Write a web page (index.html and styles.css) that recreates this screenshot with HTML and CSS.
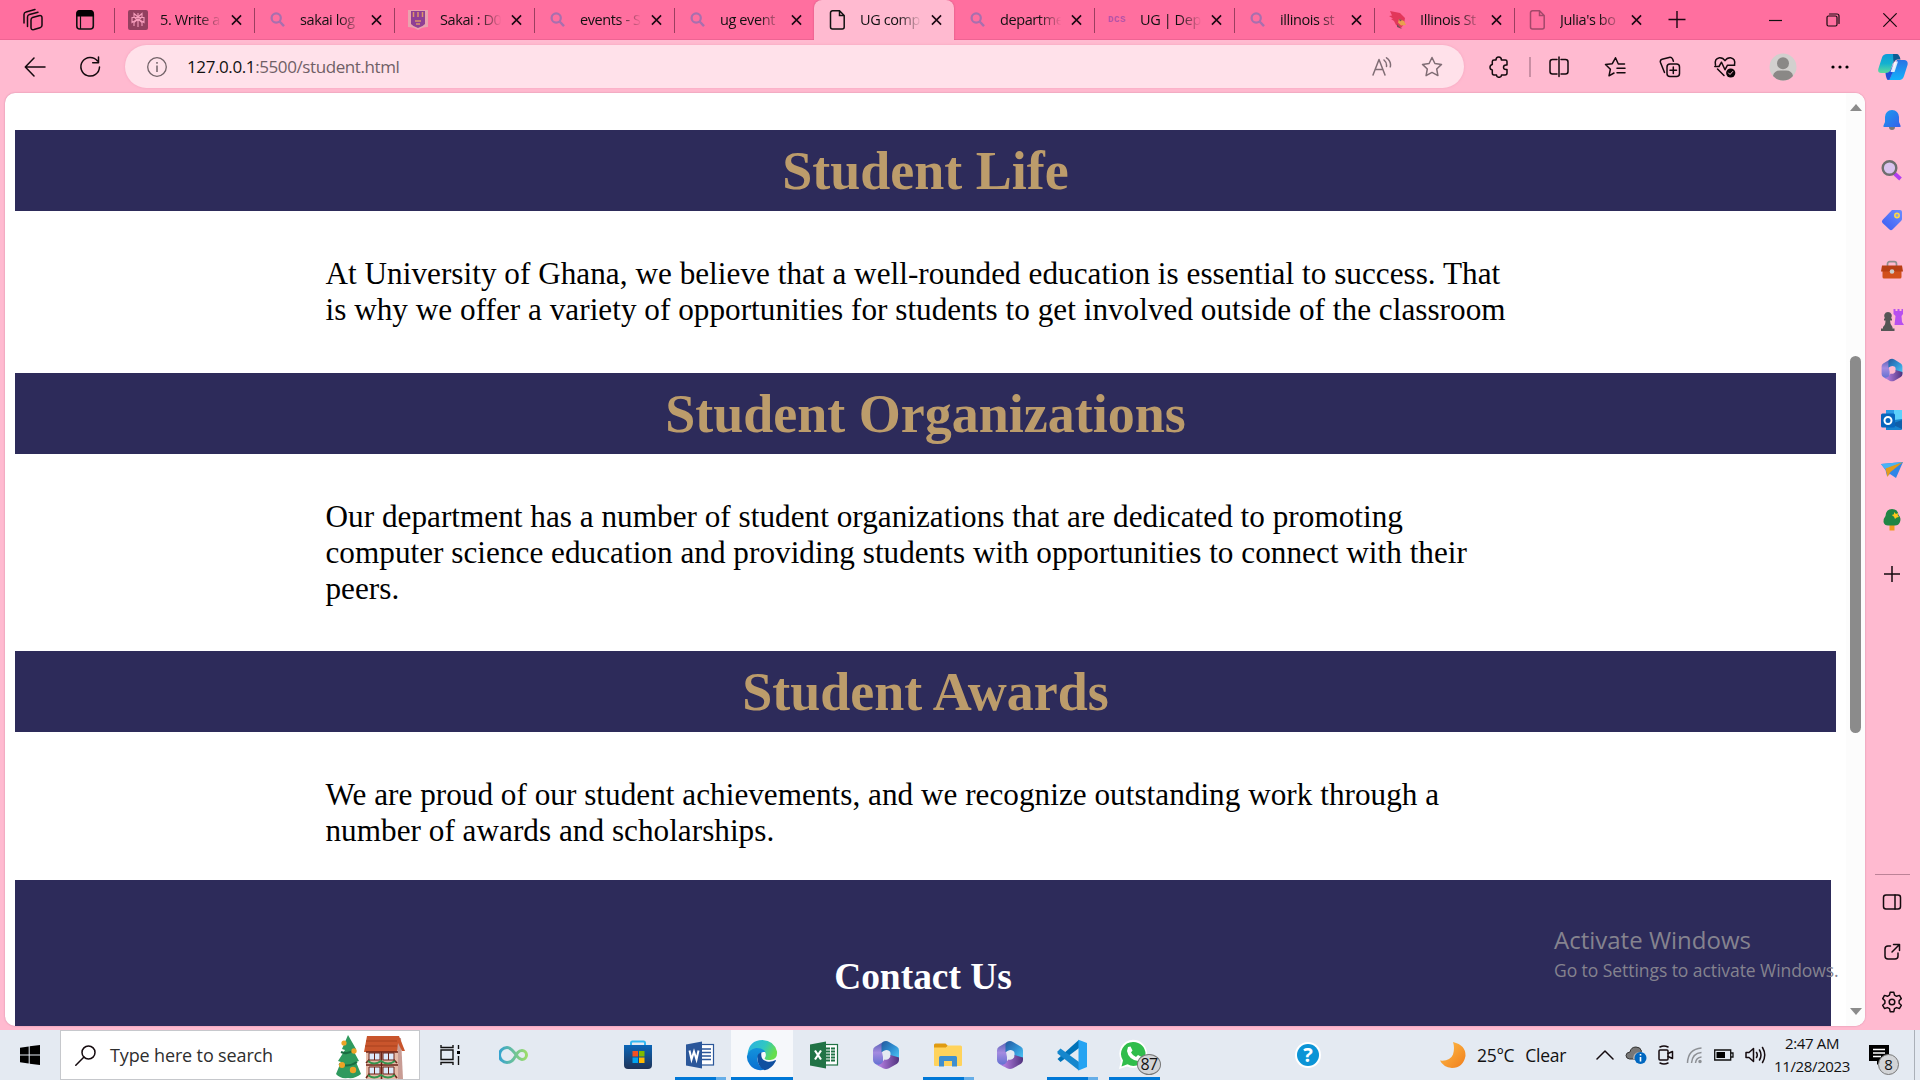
FILE: index.html
```html
<!DOCTYPE html>
<html lang="en">
<head>
<meta charset="utf-8">
<title>UG computer science</title>
<link rel="stylesheet" href="styles.css">
</head>
<body>
<svg class="defs" width="0" height="0">
  <defs>
    <symbol id="close" viewBox="0 0 12 12"><path d="M1 1l10 10M11 1L1 11" fill="none" stroke="#1a0710" stroke-width="1.700"/></symbol>
    <symbol id="lens" viewBox="0 0 20 20"><circle cx="8.200" cy="8" r="4.600" fill="none" stroke="#a86fae" stroke-width="2.200"/><path d="M11.600 11.500l4.400 4.600" stroke="#a86fae" stroke-width="2.400"/></symbol>
    <symbol id="page" viewBox="0 0 20 20"><path d="M4.500.8h7l4.700 4.700v11.500a2 2 0 0 1-2 2h-9.700a2 2 0 0 1-2-2V2.800a2 2 0 0 1 2-2zM11.500.8v4.700h4.700" fill="none" stroke="currentColor" stroke-width="1.500"/></symbol>
    <linearGradient id="gA" x1="0" y1="0" x2="0" y2="1"><stop offset="0" stop-color="#5560b4"/><stop offset=".45" stop-color="#a48be0"/><stop offset="1" stop-color="#5b6fd0"/></linearGradient>
    <linearGradient id="gB" x1="0" y1="0" x2="1" y2="1"><stop offset="0" stop-color="#24589c"/><stop offset=".5" stop-color="#2f8fd2"/><stop offset="1" stop-color="#52cdf8"/></linearGradient>
    <linearGradient id="gC" x1="0" y1="0" x2="1" y2="0"><stop offset="0" stop-color="#c48af0"/><stop offset="1" stop-color="#50327e"/></linearGradient>
    <symbol id="m365" viewBox="0 0 30 30">
      <path d="M13 1.500L4 6.800Q2 8 2 10.500v9.500q0 2.500 2 3.800l4.500 2.500q3.500.5 3.500-3V17l-1-5 4-9z" fill="url(#gA)"/>
      <path d="M12 1.900q3-1.700 6 0l8 4.900q2 1.200 2 3.700v10L19.500 16v-3q0-1.500-1.500-2.300-2.500-1.300-5 0L10.500 12.300V5q0-2 1.500-3.100z" fill="url(#gB)"/>
      <path d="M28 17.500v2.500q0 2.500-2 3.800l-8 4.500q-3 1.500-6 0l-7-4q5 1.500 7-3l1.500-1.800q2 .8 4-.5 2.300-1.300 2-4z" fill="url(#gC)"/>
    </symbol>
    <linearGradient id="gBell" x1="0" y1="0" x2="1" y2="1"><stop offset="0" stop-color="#1b9cf0"/><stop offset="1" stop-color="#3560ea"/></linearGradient>
    <linearGradient id="gTag" x1="1" y1="0" x2="0" y2="1"><stop offset="0" stop-color="#6a8cff"/><stop offset="1" stop-color="#3a5cf2"/></linearGradient>
    <linearGradient id="gEdge" x1="0" y1="0" x2="1" y2=".4"><stop offset="0" stop-color="#2bafe6"/><stop offset=".6" stop-color="#30c7c2"/><stop offset="1" stop-color="#66de4d"/></linearGradient>
    <linearGradient id="gEdge2" x1="0" y1="0" x2="0" y2="1"><stop offset="0" stop-color="#1393dc"/><stop offset="1" stop-color="#0a6fd0"/></linearGradient>
    <linearGradient id="gStore" x1="0" y1="0" x2="0" y2="1"><stop offset="0" stop-color="#0b66b8"/><stop offset="1" stop-color="#1e3358"/></linearGradient>
    <linearGradient id="gInf" x1="0" y1="0" x2="1" y2="0"><stop offset="0" stop-color="#35a3cf"/><stop offset="1" stop-color="#9bdc6a"/></linearGradient>
    <linearGradient id="gCopL" x1="0" y1="0" x2="0" y2="1"><stop offset="0" stop-color="#0e9bd8"/><stop offset=".5" stop-color="#14b1d0"/><stop offset="1" stop-color="#5fdc9b"/></linearGradient>
    <linearGradient id="gCopR" x1="0" y1="0" x2="0" y2="1"><stop offset="0" stop-color="#2a72e4"/><stop offset="1" stop-color="#12b2fb"/></linearGradient>
    <linearGradient id="gMoon" x1="0" y1="0" x2="1" y2="1"><stop offset="0" stop-color="#ffc04a"/><stop offset="1" stop-color="#f07d1c"/></linearGradient>
  </defs>
</svg>
<div class="screen">
  <header class="tabstrip">
    <div class="strip-icons">
      <svg width="22" height="24" viewBox="0 0 22 24" class="line"><path d="M10.500 9.500l6.500-1.800q3-.7 3 2v7.500q0 2-2 2.600l-6 1.700q-3 .7-3-2v-7.500q0-2 1.500-2.500zM5.500 18.500V9q0-2 2-2.500l8.500-2.300M2 15V6.500q0-2 2-2.500l9-2.500"/></svg>
      <svg width="20" height="24" viewBox="0 0 20 24"><rect x="1.800" y="3" width="16.500" height="18" rx="3" fill="none" stroke="#111" stroke-width="1.600"/><path d="M1.500 8.500V5q0-3 3-3h11q3 0 3 3v3.500z" fill="#050103"/><path d="M5.500 8v13" stroke="#111" stroke-width="1.200"/></svg>
    </div>
    <div class="tab"><svg class="fav" viewBox="0 0 20 20"><rect width="20" height="20" rx="2" fill="#93405f"/><path d="M10 3v14M10 7L6 3.500V7l4 3.500M10 7l4-3.500V7l-4 3.500M4 7.500v5L10 9l6 3.500v-5zM6 16v-3.500L10 9l4 3.500V16" fill="none" stroke="#f59cba" stroke-width="1.100"/></svg><span class="title">5. Write a</span><svg class="x"><use href="#close"/></svg></div>
    <div class="tab"><svg class="fav"><use href="#lens"/></svg><span class="title">sakai log</span><svg class="x"><use href="#close"/></svg></div>
    <div class="tab"><svg class="fav" viewBox="0 0 20 20"><path d="M0 0h20v17q-6 0-10 3-4-3-10-3z" fill="#e9a3ae"/><path d="M3 1h14v13q-2 2.500-7 4-5-1.500-7-4z" fill="#8f3f94"/><path d="M5.500 2v5M10 2v5M14.500 2v5M7 11h6M8 14h4" stroke="#dc9468" stroke-width="1.500"/></svg><span class="title">Sakai : D0</span><svg class="x"><use href="#close"/></svg></div>
    <div class="tab"><svg class="fav"><use href="#lens"/></svg><span class="title">events - S</span><svg class="x"><use href="#close"/></svg></div>
    <div class="tab"><svg class="fav"><use href="#lens"/></svg><span class="title">ug event</span><svg class="x"><use href="#close"/></svg></div>
    <div class="tab active"><svg class="fav"><use href="#page"/></svg><span class="title">UG comp</span><svg class="x"><use href="#close"/></svg></div>
    <div class="tab bare"><svg class="fav"><use href="#lens"/></svg><span class="title">departme</span><svg class="x"><use href="#close"/></svg></div>
    <div class="tab"><span class="fav dcs">DCS</span><span class="title">UG | Dep</span><svg class="x"><use href="#close"/></svg></div>
    <div class="tab"><svg class="fav"><use href="#lens"/></svg><span class="title">illinois st</span><svg class="x"><use href="#close"/></svg></div>
    <div class="tab"><svg class="fav" viewBox="0 0 20 20"><path d="M2 1l10 2 5 5-1 6-3 4-5-3-2-4-3-2 2-.5L1 6l3-.5z" fill="#e2375a"/><path d="M11 9l5 2 2 4-5 .5-3-3z" fill="#e9a04e"/><path d="M9 14l5 5-5-2zM11 9l3 1-2 1.500z" fill="#7b4b55"/></svg><span class="title">Illinois St</span><svg class="x"><use href="#close"/></svg></div>
    <div class="tab"><svg class="fav dim"><use href="#page"/></svg><span class="title">Julia's bo</span><svg class="x"><use href="#close"/></svg></div>
    <div class="newtab"><svg width="18" height="18" viewBox="0 0 18 18"><path d="M9 0v17M0.500 8.500h17" stroke="#1a0710" stroke-width="1.400"/></svg></div>
    <div class="winbtns">
      <svg width="14" height="14" viewBox="0 0 14 14"><path d="M0 7.500h13" stroke="#111" stroke-width="1.200"/></svg>
      <svg width="14" height="14" viewBox="0 0 14 14" class="line thin"><rect x="1" y="3" width="10" height="10" rx="1.500"/><path d="M3.500 1h7.500q2 0 2 2v7.500"/></svg>
      <svg width="14" height="14" viewBox="0 0 14 14" class="line thin"><path d="M.7.700l12.600 12.600M13.300.7L.7 13.300"/></svg>
    </div>
  </header>

  <nav class="toolbar">
    <div class="cell"><svg width="22" height="20" viewBox="0 0 22 20" class="line"><path d="M21 10H1.500M10 1L1.300 10 10 19"/></svg></div>
    <div class="cell"><svg width="22" height="22" viewBox="0 0 22 22" class="line"><path d="M18.500 5A9.300 9.300 0 1 0 20.500 11M19.500 1v5.800h-5.800"/></svg></div>
    <div class="address">
      <svg width="22" height="22" viewBox="0 0 22 22"><circle cx="11" cy="11" r="9.300" fill="none" stroke="#726268" stroke-width="1.300"/><path d="M11 9.500v6.500M11 6v1.800" stroke="#726268" stroke-width="1.500"/></svg>
      <span class="url">127.0.0.1<i>:5500/student.html</i></span>
      <span class="grow"></span>
      <svg width="20" height="20" viewBox="0 0 20 20" class="line grey"><path d="M1 18L7 2.500 13 18M3.200 12.500h7.700M12 3q3 2.500 2.500 6.500M14.500.8q5 3.500 3.800 9"/></svg>
      <svg width="22" height="22" viewBox="0 0 22 22" class="line grey star"><path d="M11 1.500l2.900 6 6.600.9-4.800 4.600 1.200 6.600-5.900-3.200-5.900 3.200 1.200-6.600L1.500 8.400l6.600-.9z"/></svg>
    </div>
    <div class="cell c-ext"><svg width="20" height="22" viewBox="0 0 20 22" class="line"><path d="M7 4q0-3 2.700-3t2.700 3h4q1.600 0 1.600 1.600v3.400h-1q-2.500 0-2.500 2.300T17 13.600h1V17q0 2-2 2h-3.500q0 2.300-2.500 2.300T7.500 19H5q-1.700 0-1.700-2v-3Q1 13.700 1 11.300T3.300 8.500V5.600Q3.300 4 5 4z"/></svg></div>
    <div class="cell"><span class="vbar"></span></div>
    <div class="cell"><svg width="22" height="22" viewBox="0 0 22 22" class="line"><path d="M9 3.500H4.500q-2.500 0-2.500 2.500v9.500Q2 18 4.500 18H9M13 3.500h4.500q2.500 0 2.500 2.500v9.500q0 2.500-2.500 2.500H13M11 1v19.500"/></svg></div>
    <div class="cell"><svg width="22" height="22" viewBox="0 0 22 22" class="line"><path d="M20.500 8h-6.200L11.500 1.800 8.300 7.700l-6.800.8 4.900 4.700L5 19.800l5-2.800M13 12.300h8M13 16.800h8"/></svg></div>
    <div class="cell"><svg width="22" height="22" viewBox="0 0 22 22" class="line"><rect x="8" y="8" width="12.500" height="12.500" rx="3"/><path d="M14.300 11v6.500M11 14.300h6.500M5.500 16.500L1.500 6.500q-.8-2.500 1.600-3.300l7-1.800q2.300-.6 3.500 1.600l.8 2.200"/></svg></div>
    <div class="cell"><svg width="22" height="22" viewBox="0 0 22 22" class="line"><path d="M1.500 9q-1.300-6.500 4-7.300Q9 1.500 11 4.700q2-3.200 5.500-3 5.300.8 4 7.300M.8 10.500H5l2.500-4.300 3.500 7.500 2.500-4.500h7.200M3.500 13l6.500 6.500"/><circle cx="16.700" cy="17" r="4.600" fill="#080305" stroke="none"/><path d="M14.600 17l1.400 1.500 2.700-3" stroke="#ffbad0" stroke-width="1"/></svg></div>
    <div class="cell"><svg width="28" height="28" viewBox="0 0 28 28"><circle cx="14" cy="14" r="13.500" fill="#d2d0ce"/><circle cx="14" cy="10.300" r="6" fill="#8a8886"/><path d="M4 23q1-5.500 7-5.500h6q6 0 7 5.500-4 4.500-10 4.500T4 23z" fill="#8a8886"/></svg></div>
    <div class="cell"><svg width="18" height="4" viewBox="0 0 18 4"><circle cx="2" cy="2" r="1.600"/><circle cx="9" cy="2" r="1.600"/><circle cx="16" cy="2" r="1.600"/></svg></div>
    <div class="cell"><svg width="30" height="28" viewBox="0 0 30 28"><path d="M19 7h7q4.500.5 3.500 5l-3.500 11q-1 3.500-4 4H9q3-.5 4-4z" fill="url(#gCopR)"/><path d="M21 1q-3 0-4 3l-4.500 13q-1 3-4 3H3Q-.5 20 .3 16L4 4.500Q5 1 9 1z" fill="url(#gCopL)"/><path d="M15 1h4q2.500.5 3.500 5.500h-3q-2 0-3 2l-1 2z" fill="#0e5c93"/><path d="M7.500 20q3 0 4.500-2l4-8.500-1 9-2.500 6q-1 2.500-2.500 2.500-1.800-.5-2.500-7z" fill="#1f4fd8"/><path d="M15.500 10.500q.8-2 3-2h1.500L16.500 19H12.500z" fill="#fff" fill-opacity=".85"/></svg></div>
  </nav>

  <div class="middle">
    <main class="viewport">
      <div class="document">
        <h1 class="bar">Student Life</h1>
        <p class="para">At University of Ghana, we believe that a well-rounded education is essential to success. That is why we offer a variety of opportunities for students to get involved outside of the classroom</p>
        <h1 class="bar">Student Organizations</h1>
        <p class="para">Our department has a number of student organizations that are dedicated to promoting computer science education and providing students with opportunities to connect with their peers.</p>
        <h1 class="bar">Student Awards</h1>
        <p class="para last">We are proud of our student achievements, and we recognize outstanding work through a number of awards and scholarships.</p>
        <footer class="contact"><h2>Contact Us</h2></footer>
      </div>
      <div class="scroll">
        <svg width="12" height="7" viewBox="0 0 12 7"><path d="M0 7l6-7 6 7z" fill="#8b8b8b"/></svg>
        <span class="thumb"></span>
        <svg width="12" height="7" viewBox="0 0 12 7"><path d="M0 0l6 7 6-7z" fill="#8b8b8b"/></svg>
      </div>
    </main>
    <aside class="sidebar">
      <div class="side"><svg width="18" height="22" viewBox="0 0 18 22"><path d="M6 18h6q0 3-3 3t-3-3z" fill="#777"/><path d="M9 1q6.500.3 7 7v5l1.500 3.500V18H.5v-1.500L2 13V8q.5-6.700 7-7z" fill="url(#gBell)"/></svg></div>
      <div class="side"><svg width="22" height="22" viewBox="0 0 22 22"><path d="M13 14l6.500 6" stroke="#b23df0" stroke-width="3.800"/><circle cx="8.500" cy="9" r="6.800" fill="#d9c3ee" stroke="#6e6e6e" stroke-width="2.400"/></svg></div>
      <div class="side"><svg width="22" height="22" viewBox="0 0 22 22"><path d="M11 1h8q2 0 2 2v7q0 1-1 2l-8.500 8.500q-1.500 1.300-3 0L1.500 14q-1.300-1.500 0-3z" fill="url(#gTag)"/><circle cx="16" cy="6.500" r="2.200" fill="#91a0d8" stroke="#ffd93f" stroke-width="1.500"/></svg></div>
      <div class="side"><svg width="24" height="20" viewBox="0 0 24 20"><path d="M7.500 6V4q0-2.300 2.300-2.300h4.400q2.300 0 2.300 2.300v2" fill="none" stroke="#8e8e8e" stroke-width="1.700"/><path d="M2.500 10h19v7q0 1.500-1.500 1.500H4q-1.500 0-1.500-1.500z" fill="#d24f1b"/><path d="M2 5.500h20l1 6H1z" fill="#b83f14"/><circle cx="12" cy="11.500" r="2.300" fill="#ccc"/></svg></div>
      <div class="side"><svg width="24" height="24" viewBox="0 0 24 24"><path d="M13.500 1h2v2h2V1h2v2h2V1H23v5l-1.500 2 .5 6 2 3h-9.500l1-9-2-2z" fill="#b750ef"/><path d="M8 4a4 4 0 0 1 3 6.500h1v2h-2q0 4 2.500 6.500v1.500h2V23H1v-2.500h2V19q2.500-2 2.500-6.500H4v-2h1A4 4 0 0 1 8 4z" fill="#555"/></svg></div>
      <div class="side"><svg width="24" height="24"><use href="#m365"/></svg></div>
      <div class="side"><svg width="22" height="22" viewBox="0 0 22 22"><path d="M5 1h15q1 0 1 1v9L5 12z" fill="#2b9ae6"/><path d="M13 1h8v9l-8 5z" fill="#5bd0fb"/><path d="M5 12l16-2v10q0 1-1 1H5z" fill="#1683cf"/><path d="M21 11v9L10 15z" fill="#0f5faa"/><rect y="4.500" width="14" height="14" rx="1.500" fill="#0765bd"/><circle cx="7" cy="11.500" r="3.500" fill="none" stroke="#fff" stroke-width="2"/></svg></div>
      <div class="side"><svg width="24" height="20" viewBox="0 0 24 20"><path d="M1 4L23 2 16 18l-6-4-3 2-1.500-6z" fill="#2f86e8"/><path d="M1 4L23 2 5.500 9.500z" fill="#49b3f6"/><path d="M23 2L5.500 8.500 7.500 17l3-5z" fill="#e39a1c"/></svg></div>
      <div class="side"><svg width="20" height="24" viewBox="0 0 20 24"><path d="M7.500 16h5v6.500h-5z" fill="#f39a1e"/><path d="M10 1q6 0 6.500 6 3 3 1.500 7-1.500 4-6 3.500H7Q2.500 18 1.500 14 1 11 3.500 8 4 1 10 1z" fill="#218544"/><path d="M12 4l2 2 2-1-.3 2.300L17 9l-2.300.5L13 11l-1-2.300L9.800 7l2.200-.8z" fill="#ffc61b"/></svg></div>
      <div class="side plus"><svg width="16" height="16" viewBox="0 0 16 16" class="line"><path d="M8 0v16M0 8h16"/></svg></div>
      <div class="side-foot">
        <div class="side"><svg width="20" height="18" viewBox="0 0 20 18" class="line"><rect x="1.500" y="2" width="17" height="14" rx="2.500"/><path d="M13 2v14"/></svg></div>
        <div class="side"><svg width="18" height="18" viewBox="0 0 18 18" class="line"><path d="M7.500 3H5Q2 3 2 6v7q0 3 3 3h7q3 0 3-3v-3M10.500 1.500h6v6M16.500 1.500L9 9"/></svg></div>
        <div class="side"><svg width="22" height="22" viewBox="0 0 22 22" class="line"><circle cx="11" cy="11" r="2.800"/><path d="M9.200 1.200h3.600l.7 3 2 1.100 3-.9 1.800 3.200-2.200 2.100v2.500l2.200 2.100-1.800 3.200-3-.9-2 1.100-.7 3H9.200l-.7-3-2-1.100-3 .9-1.800-3.200 2.200-2.100V9.700L1.700 7.600l1.800-3.200 3 .9 2-1.100z"/></svg></div>
      </div>
    </aside>
    <div class="watermark"><span class="w1">Activate Windows</span><span class="w2">Go to Settings to activate Windows.</span></div>
  </div>

  <div class="taskbar">
    <div class="start"><svg width="20" height="20" viewBox="0 0 20 20"><path d="M0 2.800L8.700 1.500v8H0zM9.700 1.300L20 0v9.500H9.700zM0 10.500h8.700v8L0 17.200zM9.700 10.500H20V20L9.700 18.700z"/></svg></div>
    <div class="search">
      <svg width="21" height="21" viewBox="0 0 21 21" class="line"><circle cx="13.500" cy="7.500" r="6.500"/><path d="M9 12L.8 20.300"/></svg>
      <span class="hint">Type here to search</span>
      <svg class="scene" width="72" height="44" viewBox="0 0 72 44">
        <path d="M13 0l8 14-3 1 6 11-3 1 5 12q-6 5-13 4-8 1-12-4l5-12-3-1 7-11-3-1z" fill="#2f9a5e"/><path d="M6 17q7 3 13-2M4 29q9 4 18-2" stroke="#1a6d42" fill="none" stroke-width="2"/>
        <circle cx="9" cy="8" r="2.600" fill="#eda326"/><circle cx="19" cy="16" r="2.700" fill="#eda326"/><circle cx="7" cy="30" r="3" fill="#eda326"/><circle cx="18" cy="35" r="3.200" fill="#eda326"/>
        <path d="M62 3h4l2 41h-7z" fill="#c89c94"/><path d="M31 15h32v29H31z" fill="#e6bba9"/>
        <path d="M32 1h32l6 15h-3l-4-8-1 9H29z" fill="#c9552c"/><path d="M31 6h31M30 11h32" stroke="#a8431f" stroke-width="1"/>
        <path d="M31 17h32M31 30h32M31 28l5-5M62 28l-5-5M46.500 17v27M31 43l4-5M62 43l-4-5" stroke="#6b2418" stroke-width="1.600"/>
        <path d="M34 18h11v7H34zM48 18h11v7H48zM34 32h11v7H34zM48 32h11v7H48z" fill="#dce9fb" stroke="#6b2418" stroke-width="1"/>
        <path d="M39.500 18v7M53.500 18v7M39.500 32v7M53.500 32v7" stroke="#6b2418"/>
        <path d="M33 26q6 5 13 0 7 5 14 0M33 40q6 5 13 0 7 5 14 0" fill="none" stroke="#36954f" stroke-width="2"/>
      </svg>
    </div>
    <div class="tcell tv"><svg width="22" height="20" viewBox="0 0 22 20"><path d="M1 0v2.500h12V0M1 20v-2.500h12V20M1 5h12v9.500H1zM18.500 0v4M18.500 11v9" fill="none" stroke="#111" stroke-width="1.400"/><rect x="17" y="6" width="3" height="3"/></svg></div>
    <div class="tcell inf"><svg width="30" height="18" viewBox="0 0 30 18"><path d="M23 13.500q-2.500 0-5-3.500T13 4Q10.500 1.500 8 1.500a7.300 7.300 0 0 0 0 15q4.500 0 7-4t3.800-6q1.700-2 4.200-2a4.500 4.500 0 0 1 0 9z" fill="none" stroke="url(#gInf)" stroke-width="3"/></svg></div>
    <div class="apps">
      <div class="app"><svg width="30" height="30" viewBox="0 0 30 30"><path d="M8 7V3q0-1.500 1.500-1.500h11Q22 1.500 22 3v4" fill="none" stroke="#32b8f3" stroke-width="2"/><path d="M1 5h28v20q0 4-4 4H5q-4 0-4-4z" fill="url(#gStore)"/><path d="M9.500 11H15v5.500H9.500z" fill="#f25022"/><path d="M16 11h5.500v5.500H16z" fill="#7fba00"/><path d="M9.500 17.500H15V23H9.500z" fill="#00a4ef"/><path d="M16 17.500h5.500V23H16z" fill="#ffb900"/></svg></div>
      <div class="app run two"><svg width="30" height="28" viewBox="0 0 30 28"><rect x="14" y="3.500" width="14.500" height="20.500" fill="#fff" stroke="#2b579a" stroke-width="1.200"/><path d="M17 8h9M17 11.500h9M17 15h9M17 18.500h9" stroke="#2b579a" stroke-width="1.500"/><path d="M1 3.500L17 .5v27L1 24.500z" fill="#2b579a"/><path d="M4.500 9.500l2 9 2.500-8 2.500 8 2-9" fill="none" stroke="#fff" stroke-width="2"/></svg></div>
      <div class="app run open"><svg width="32" height="32" viewBox="0 0 32 32"><path d="M1.500 15.500Q3 1 16.500 1 28 1.500 31 12.500q.8 7.500-6.500 8.500-5 .5-6-1.500 2.500-3 .5-6.500-4-4-9-2-5.500 2-8.500 4.500z" fill="url(#gEdge)"/><path d="M1 17q2-7 9-8 7-.3 9.500 4-7-1-8 6-.5 8 8 11.500Q9 33 4 26 .5 22 1 17z" fill="url(#gEdge2)"/><path d="M11.500 19q-.8-4 4-6-1.500 8 5.500 9.500 5 .7 8.500-1.500.8.200.2 1.200-4 7.500-11 9Q11.500 28 11.500 19z" fill="#0f4fa0"/></svg></div>
      <div class="app"><svg width="30" height="28" viewBox="0 0 30 28"><rect x="14" y="3.500" width="14.500" height="20.500" fill="#fff" stroke="#217346" stroke-width="1.200"/><path d="M17 7.500h9M17 10.500h9M17 13.500h9M17 16.500h9M17 19.500h9" stroke="#217346" stroke-width="1.800"/><path d="M21.500 5v18" stroke="#fff"/><path d="M1 3.500L17 .5v27L1 24.500z" fill="#217346"/><path d="M6 9.500l6 9M12 9.500l-6 9" stroke="#fff" stroke-width="2.200"/></svg></div>
      <div class="app"><svg width="30" height="30"><use href="#m365"/></svg></div>
      <div class="app run two"><svg width="30" height="26" viewBox="0 0 30 26"><path d="M1 3q0-1.500 1.500-1.500h10L15 4 13 6H1z" fill="#e09b12"/><path d="M1 5.500h12l2-2h12.500Q29 3.500 29 5v18q0 1-1 1H2q-1 0-1-1z" fill="#ffd35c"/><path d="M6 24.500v-9q0-1.500 1.500-1.500h15q1.500 0 1.500 1.500v9h-5V19h-8v5.500z" fill="#3f8fd0"/></svg></div>
      <div class="app"><svg width="30" height="30"><use href="#m365"/></svg></div>
      <div class="app run two"><svg width="32" height="32" viewBox="0 0 32 32"><path d="M1.500 20L23 .8V9L4.500 23z" fill="#0072b8"/><path d="M1.500 12.500l3-3L23 23v8.500L1.500 14.500z" fill="#1687cd"/><path d="M22.500.8L31 4v24l-8.500 3.500z" fill="#25a3f2"/></svg></div>
      <div class="app run"><svg width="30" height="32" viewBox="0 0 30 32"><path d="M14 .8A14 14 0 0 1 28 15 14 14 0 0 1 8 27.500L0 30l2-8.500A14 14 0 0 1 14 .8z" fill="#fff"/><path d="M14.500 3A12 12 0 0 1 26.500 15 12 12 0 0 1 8.500 25.300L2.500 27.500 4 21.500A12 12 0 0 1 14.500 3z" fill="#30bd4b"/><path d="M9 8l2.500-.5 2 4-1.500 2q2 3.500 5 4.500l2-2 3.500 2q0 3.500-3.500 4Q9.500 20.500 8 12z" fill="#fff"/></svg><span class="badge count">87</span></div>
    </div>
    <div class="tcell help"><svg width="28" height="28" viewBox="0 0 28 28"><circle cx="14" cy="14" r="13" fill="#fff"/><circle cx="14" cy="14" r="11" fill="#0b94d6"/></svg><b>?</b></div>
    <div class="weather"><svg width="28" height="28" viewBox="0 0 28 28"><path d="M14 1Q27 4 26.500 15 24 27 13 27 4 26 1 19.500q10 1 13-6Q16 7 14 1z" fill="url(#gMoon)"/></svg><span class="temp">25°C</span><span>Clear</span></div>
    <div class="tray">
      <svg width="18" height="10" viewBox="0 0 18 10" class="line"><path d="M1 9l8-8 8 8"/></svg>
      <svg width="22" height="20" viewBox="0 0 22 20"><path d="M4.500 14Q1 13.500 1 10.500T5 7q1-5 6-5 4.500 0 5.500 4l-4 8z" fill="#777" stroke="#333"/><path d="M8 14q0-6 6-7 4 0 4 4l-4 3z" fill="#b5b5b5"/><circle cx="15.500" cy="13" r="6" fill="#0067c0"/><path d="M15.500 12v4.500M15.500 9v1.500" stroke="#fff" stroke-width="1.600"/></svg>
      <svg width="18" height="20" viewBox="0 0 18 20" class="line"><rect x="2" y="5" width="9" height="10" rx="1"/><path d="M11 8.500l4.500-2v7l-4.500-2M3 2q4-2 8 0M3 18q4 2 8 0"/></svg>
      <svg width="18" height="18" viewBox="0 0 18 18" fill="none" stroke="#8d9095" stroke-width="1.500"><path d="M1.500 17Q2 3 15.500 2M5.500 17q1-10 10-10.500M9.500 17q.5-5.500 6-6"/><circle cx="14" cy="15.500" r="1" fill="#888"/></svg>
      <svg width="20" height="12" viewBox="0 0 20 12"><path d="M.7 1h16v10h-16zM17 4h2v4h-2" fill="none" stroke="#111" stroke-width="1.300"/><path d="M2.500 3H11v6H2.500z"/></svg>
      <svg width="21" height="18" viewBox="0 0 21 18" class="line"><path d="M1 6.500h3l4.500-4v13l-4.500-4H1zM11.500 6.500q1.500 2.500 0 5M14.500 4q3 5 0 10M17.500 1.500q4.500 7.500 0 15"/></svg>
    </div>
    <div class="clock"><span>2:47 AM</span><span>11/28/2023</span></div>
    <div class="notif"><svg width="20" height="20" viewBox="0 0 20 20"><path d="M0 0h20v16h-8l-4 4v-4H0z"/><path d="M4 4.500h12M4 8h12M4 11.500h8" stroke="#fff" stroke-width="1.400"/></svg><span class="badge">8</span></div>
    <div class="peek"></div>
  </div>
</div>
</body>
</html>
```
FILE: styles.css
```css
* { box-sizing: border-box; }
body { margin: 0; overflow: hidden; font-family: "Open Sans", "Noto Sans", sans-serif; color: #111; }
svg { display: block; flex: none; }
.defs { position: absolute; }
.screen { width: 1920px; height: 1080px; display: flex; flex-direction: column; background: #ffbad0; }
.line { fill: none; stroke: #140a0e; stroke-width: 1.500; stroke-linecap: round; stroke-linejoin: round; }
.thin { stroke-width: 1.200; }
.grey { stroke: #806d75; }

.tabstrip { height: 40px; flex: none; display: flex; background: #ff6f9f; box-shadow: inset 0 -1px #ee6493; }
.strip-icons { width: 114px; flex: none; display: flex; align-items: center; padding-left: 22px; gap: 31px; }
.tab { width: 140px; flex: none; display: flex; align-items: center; padding: 0 11px 0 14px; position: relative; }
.tab::before { content: ""; position: absolute; left: 0; top: 8px; width: 1px; height: 25px; background: #9b3f5f; }
.tab.active { background: #ffbad0; border-radius: 8px 8px 0 0; box-shadow: 0 0 2px #c95078; clip-path: inset(-3px -3px 0 -3px); }
.tab.active::before, .tab.bare::before { display: none; }
.fav { width: 20px; height: 20px; flex: none; }
.fav.dim { color: #a3486a; }
.fav.dcs { font: 700 9px/20px "Liberation Mono", monospace; color: #b452a8; letter-spacing: .6px; }
.title { width: 64px; flex: none; margin: -1px 0 0 12px; font-size: 14.500px; line-height: 22px; letter-spacing: -.4px; white-space: nowrap; -webkit-mask-image: linear-gradient(90deg, #000 60%, transparent 96%); mask-image: linear-gradient(90deg, #000 60%, transparent 96%); }
.x { width: 11px; height: 12px; margin-left: 7px; }
.newtab { width: 46px; flex: none; display: flex; align-items: center; justify-content: center; }
.winbtns { display: flex; align-items: center; gap: 43px; margin-left: 69px; }

.toolbar { height: 53px; flex: none; display: grid; grid-template-columns: 70px 40px 15px 1339px 10px 50px 12px 46px 66px 44px 66px 50px 64px 42px; align-items: center; }
.cell { display: flex; justify-content: center; align-items: center; }
.address { grid-column: 4; height: 43px; border-radius: 22px; background: #ffe1ea; display: flex; align-items: center; padding: 0 21px; box-shadow: 0 0 3px #f3a5be; }
.url { margin-left: 19px; font-size: 17px; letter-spacing: -.4px; }
.url i { font-style: normal; color: #705f66; }
.grow { flex: 1; }
.star { margin-left: 29px; }
.c-ext { grid-column: 6; }
.vbar { width: 2px; height: 20px; background: #c98fa4; }

.middle { flex: 1; display: flex; padding: 0 0 4px 5px; min-height: 0; position: relative; }
.viewport { width: 1860px; display: flex; border-radius: 10px; background: #fff; overflow: hidden; box-shadow: 0 0 2px #d084a0; }
.document { width: 1841px; padding: 37px 10px 0; font: 31.200px/36px "Liberation Serif", "Times New Roman", serif; color: #000; overflow: hidden; }
.bar { margin: 0; height: 81px; background: #2d2b5a; color: #bc9c6b; font-size: 54px; line-height: 83px; text-align: center; }
.para { margin: 45px 0 44.700px 310.500px; width: 1190px; letter-spacing: .028px; }
.para.last { margin-bottom: 31px; }
.contact { width: 1816px; height: 146px; padding-top: 78px; background: #2d2b5a; color: #fff; text-align: center; }
.contact h2 { margin: 0; font-size: 37.440px; line-height: 38px; }
.scroll { width: 19px; background: #fcfcfc; display: flex; flex-direction: column; align-items: center; padding: 11px 0; justify-content: space-between; }
.thumb { width: 11px; height: 377px; border-radius: 6px; background: #8b8b8b; margin-bottom: 30px; }

.sidebar { width: 55px; padding: 2px 1px 0 0; display: flex; flex-direction: column; }
.side { height: 50px; display: flex; align-items: center; justify-content: center; }
.side.plus { height: 58px; }
.side-foot { margin: auto 0 -1px; padding-top: 3px; position: relative; }
.side-foot::before { content: ""; position: absolute; left: 10px; top: 0; width: 35px; height: 1px; background: #bd8297; }
.watermark { position: absolute; left: 1554px; top: 830px; display: flex; flex-direction: column; color: #85838f; white-space: nowrap; }
.w1 { font-size: 24px; line-height: 34px; }
.w2 { font-size: 17.500px; line-height: 26px; letter-spacing: -.06px; }

.taskbar { height: 50px; flex: none; display: flex; background: #e4eaf2; }
.start { width: 60px; display: flex; align-items: center; justify-content: center; }
.search { width: 360px; border: 1px solid #c6c8cc; background: #fff; display: flex; align-items: center; padding: 0 12px 0 14px; }
.hint { margin-left: 14px; flex: 1; font-size: 18px; letter-spacing: -.14px; color: #2e2e2e; }
.scene { align-self: flex-end; }
.tcell { display: flex; align-items: center; justify-content: center; }
.tv { width: 62px; }
.inf { width: 64px; }
.apps { margin-left: 61px; display: flex; }
.app { width: 62px; height: 50px; display: flex; align-items: center; justify-content: center; position: relative; }
.run::after { content: ""; position: absolute; left: 6px; bottom: 0; width: 51px; height: 3px; background: #0078d7; }
.two::after { background: linear-gradient(90deg, #0078d7 41px, #66aee8 41px); }
.open { background: #f6f8fb; }
.open::after { left: 0; width: 62px; }
.badge { position: absolute; right: -1px; bottom: 4px; width: 21px; height: 21px; border: 1px solid #777; border-radius: 50%; background: #d2d4d7; font-size: 15px; line-height: 19px; text-align: center; }
.badge.count { right: 4px; bottom: 5px; width: 24px; font-size: 16px; letter-spacing: -.7px; }
.help { width: 40px; margin-left: 123px; position: relative; }
.help b { position: absolute; color: #fff; font-size: 20px; line-height: 26px; }
.weather { margin-left: 111px; display: flex; align-items: center; font-size: 17.500px; letter-spacing: -.3px; white-space: nowrap; width: 150px; }
.temp { margin: 0 11px 0 10px; }
.tray { display: flex; align-items: center; gap: 10.500px; margin-left: 7px; width: 170px; }
.clock { width: 92px; display: flex; flex-direction: column; align-items: center; justify-content: center; font-size: 15px; line-height: 23px; letter-spacing: -.35px; }
.notif { margin-left: 11px; width: 20px; height: 50px; position: relative; padding-top: 15px; }
.notif .badge { right: -10px; bottom: 5px; }
.peek { margin-left: 25px; width: 1px; background: #aab0b8; }
```
